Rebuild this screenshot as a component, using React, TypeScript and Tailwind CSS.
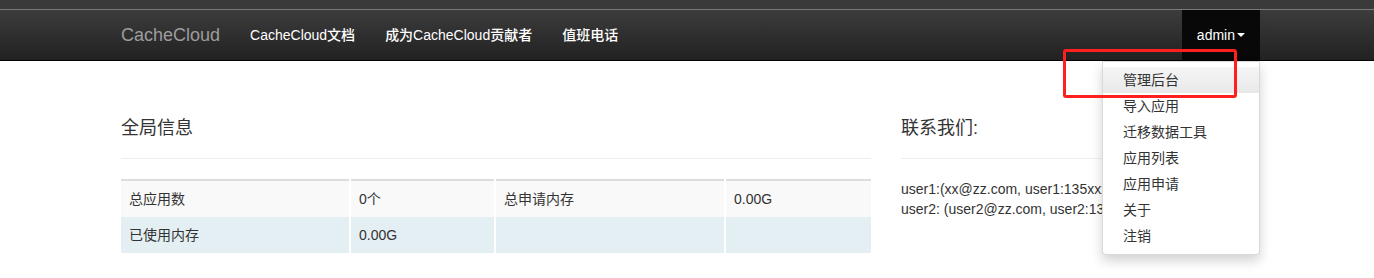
import React from "react";

const font = {
  fontFamily: '"Liberation Sans", "Noto Sans CJK SC", sans-serif',
};

const navLinks = ["CacheCloud文档", "成为CacheCloud贡献者", "值班电话"];

const menuItems = ["管理后台", "导入应用", "迁移数据工具", "应用列表", "应用申请", "关于", "注销"];

function Navbar() {
  return (
    <div>
      <div className="h-[9px] bg-[#3a3a3a]" />
      <div className="h-px bg-[#7a7a7a]" />
      <div className="h-[51px] bg-gradient-to-b from-[#3c3c3c] to-[#222222] border-b border-black">
        <div className="ml-[121px] flex h-[50px] w-[1139px] items-center">
          <span className="text-[18px] text-[#9d9d9d]">CacheCloud</span>
          <ul className="ml-[15px] flex h-full items-center">
            {navLinks.map((l) => (
              <li key={l} className="px-[15px] text-[14px] font-medium text-white">
                {l}
              </li>
            ))}
          </ul>
          <div className="relative ml-auto flex h-full items-center bg-[#080808] px-[15px] text-[14px] text-white">
            admin
            <span className="ml-[2px] inline-block h-0 w-0 border-x-[4px] border-t-[4px] border-x-transparent border-t-white" />
            {/* dropdown menu */}
            <div className="absolute right-0 top-[51px] z-10 w-[158px] rounded-b-[4px] border border-[rgba(0,0,0,0.15)] bg-white py-[5px] shadow-[0_6px_12px_rgba(0,0,0,0.175)]">
              {menuItems.map((m, i) => (
                <div
                  key={m}
                  className={
                    "h-[26px] px-[20px] text-[14px] leading-[26px] text-[#333] " +
                    (i === 0 ? "bg-gradient-to-b from-[#f5f5f5] to-[#e8e8e8]" : "")
                  }
                >
                  {m}
                </div>
              ))}
            </div>
          </div>
        </div>
      </div>
    </div>
  );
}

function GlobalInfo() {
  const cell = "px-[8px] py-[8px] leading-[20px] border-r-2 border-white";
  return (
    <div className="w-[750px]">
      <h4 className="mt-[57px] pb-[20px] text-[18px] leading-[20px] text-[#333] border-b border-[#eeeeee]">
        全局信息
      </h4>
      <table className="mt-[20px] w-full border-t-2 border-[#dddddd] text-[14px] text-[#333]">
        <tbody>
          <tr className="bg-[#f9f9f9] h-[37px]">
            <td className={cell + " w-[229px]"}>总应用数</td>
            <td className={cell + " w-[145px]"}>0个</td>
            <td className={cell + " w-[230px]"}>总申请内存</td>
            <td className="px-[8px] py-[8px] leading-[20px]">0.00G</td>
          </tr>
          <tr className="bg-[#e4eff4] h-[36px]">
            <td className={cell}>已使用内存</td>
            <td className={cell}>0.00G</td>
            <td className={cell}></td>
            <td className="px-[8px] py-[8px]"></td>
          </tr>
        </tbody>
      </table>
    </div>
  );
}

function Contact() {
  return (
    <div className="w-[360px]">
      <h4 className="mt-[57px] pb-[20px] text-[18px] leading-[20px] text-[#333] border-b border-[#eeeeee]">
        联系我们:
      </h4>
      <div className="mt-[20px] whitespace-nowrap text-[14px] leading-[20px] text-[#333]">
        <div>user1:(xx@zz.com, user1:135xxxxxxxx)</div>
        <div>user2: (user2@zz.com, user2:135xxxxxxxx)</div>
      </div>
    </div>
  );
}

export default function App() {
  return (
    <div className="relative h-[278px] overflow-hidden bg-white" style={font}>
      <Navbar />
      <div className="ml-[121px] flex w-[1140px] gap-[30px]">
        <GlobalInfo />
        <Contact />
      </div>
      {/* red annotation box */}
      <div className="pointer-events-none absolute left-[1063px] top-[49px] z-20 h-[49px] w-[174px] rounded-[3px] border-[3px] border-[#ff1f1f]" />
    </div>
  );
}
